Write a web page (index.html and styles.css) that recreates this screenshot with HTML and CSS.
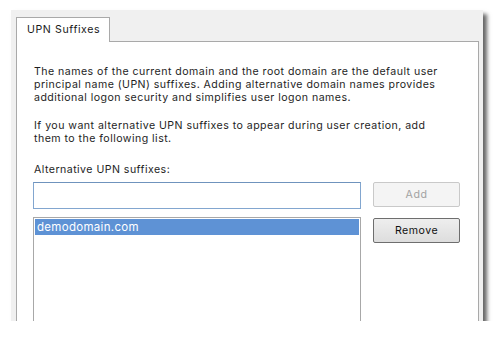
FILE: index.html
```html
<!DOCTYPE html>
<html>
<head>
<meta charset="utf-8">
<link rel="stylesheet" href="styles.css">
</head>
<body>
<div class="shot">
  <div class="tabs">
    <div class="tab">UPN Suffixes</div>
    <div class="tab-fill"></div>
  </div>
  <div class="panel">
    <p class="desc">The names of the current domain and the root domain are the default user<br>principal name (UPN) suffixes. Adding alternative domain names provides<br>additional logon security and simplifies user logon names.</p>
    <p class="desc second">If you want alternative UPN suffixes to appear during user creation, add<br>them to the following list.</p>
    <div class="label">Alternative UPN suffixes:</div>
    <div class="grid">
      <div class="input"></div>
      <button class="btn disabled">Add</button>
      <div class="list"><div class="item selected">demodomain.com</div></div>
      <button class="btn remove">Remove</button>
    </div>
  </div>
</div>
</body>
</html>
```

FILE: styles.css
```css
html, body {
  margin: 0;
  background: #ffffff;
}
body {
  padding: 10px 0 0 11px;
  font-family: Inter, "Open Sans", sans-serif;
  font-size: 10.6px;
  letter-spacing: 0.46px;
  color: #222;
}
.shot {
  width: 472px;
  height: 311px;
  box-sizing: border-box;
  background: #f0f0f0;
  box-shadow: 4px 4px 4px rgba(0, 0, 0, 0.6);
  padding: 7px 4px 0 5px;
  display: flex;
  flex-direction: column;
  overflow: hidden;
}
.tabs {
  display: flex;
  height: 25px;
  flex: none;
}
.tab {
  width: 94px;
  box-sizing: border-box;
  border: 1px solid #a9a9a9;
  border-bottom: none;
  background: #fff;
  padding-left: 10px;
  line-height: 24px;
  letter-spacing: 0.6px;
  color: #1a1a1a;
}
.tab-fill {
  flex: 1;
  border-bottom: 1px solid #a9a9a9;
}
.panel {
  flex: 1;
  background: #fff;
  border: 1px solid #a9a9a9;
  border-top: none;
  padding: 24px 0 0 17px;
}
.desc {
  margin: 0;
  line-height: 12.8px;
  white-space: nowrap;
  color: #1e1e1e;
}
.second {
  margin-top: 16px;
}
.label {
  margin-top: 18px;
  line-height: 12.8px;
  color: #1e1e1e;
}
.grid {
  margin-top: 5px;
  display: grid;
  grid-template-columns: 328px 87px;
  column-gap: 12px;
  row-gap: 8px;
  align-items: start;
  margin-left: -1px;
}
.input {
  height: 27px;
  box-sizing: border-box;
  border: 1px solid #82a6cf;
  border-top-color: #6f93bd;
  background: #fff;
}
.btn {
  height: 25px;
  box-sizing: border-box;
  font-family: inherit;
  font-size: 10.6px;
  letter-spacing: 0.5px;
  padding: 0;
  border-radius: 2px;
}
.disabled {
  border: 1px solid #c9c9c9;
  background: #f4f4f4;
  color: #a2a2a2;
}
.remove {
  margin-top: 1px;
  border: 1px solid #6e6e6e;
  background: linear-gradient(#eeeeee, #dddddd);
  color: #111;
}
.list {
  height: 130px;
  box-sizing: border-box;
  border: 1px solid #a8a8a8;
  background: #fff;
  padding: 1px 1px 0 1px;
}
.item {
  height: 16px;
  line-height: 16px;
  padding-left: 2px;
  font-size: 11.5px;
  letter-spacing: 0.3px;
}
.selected {
  background: #5e92d5;
  color: #fff;
}
```
